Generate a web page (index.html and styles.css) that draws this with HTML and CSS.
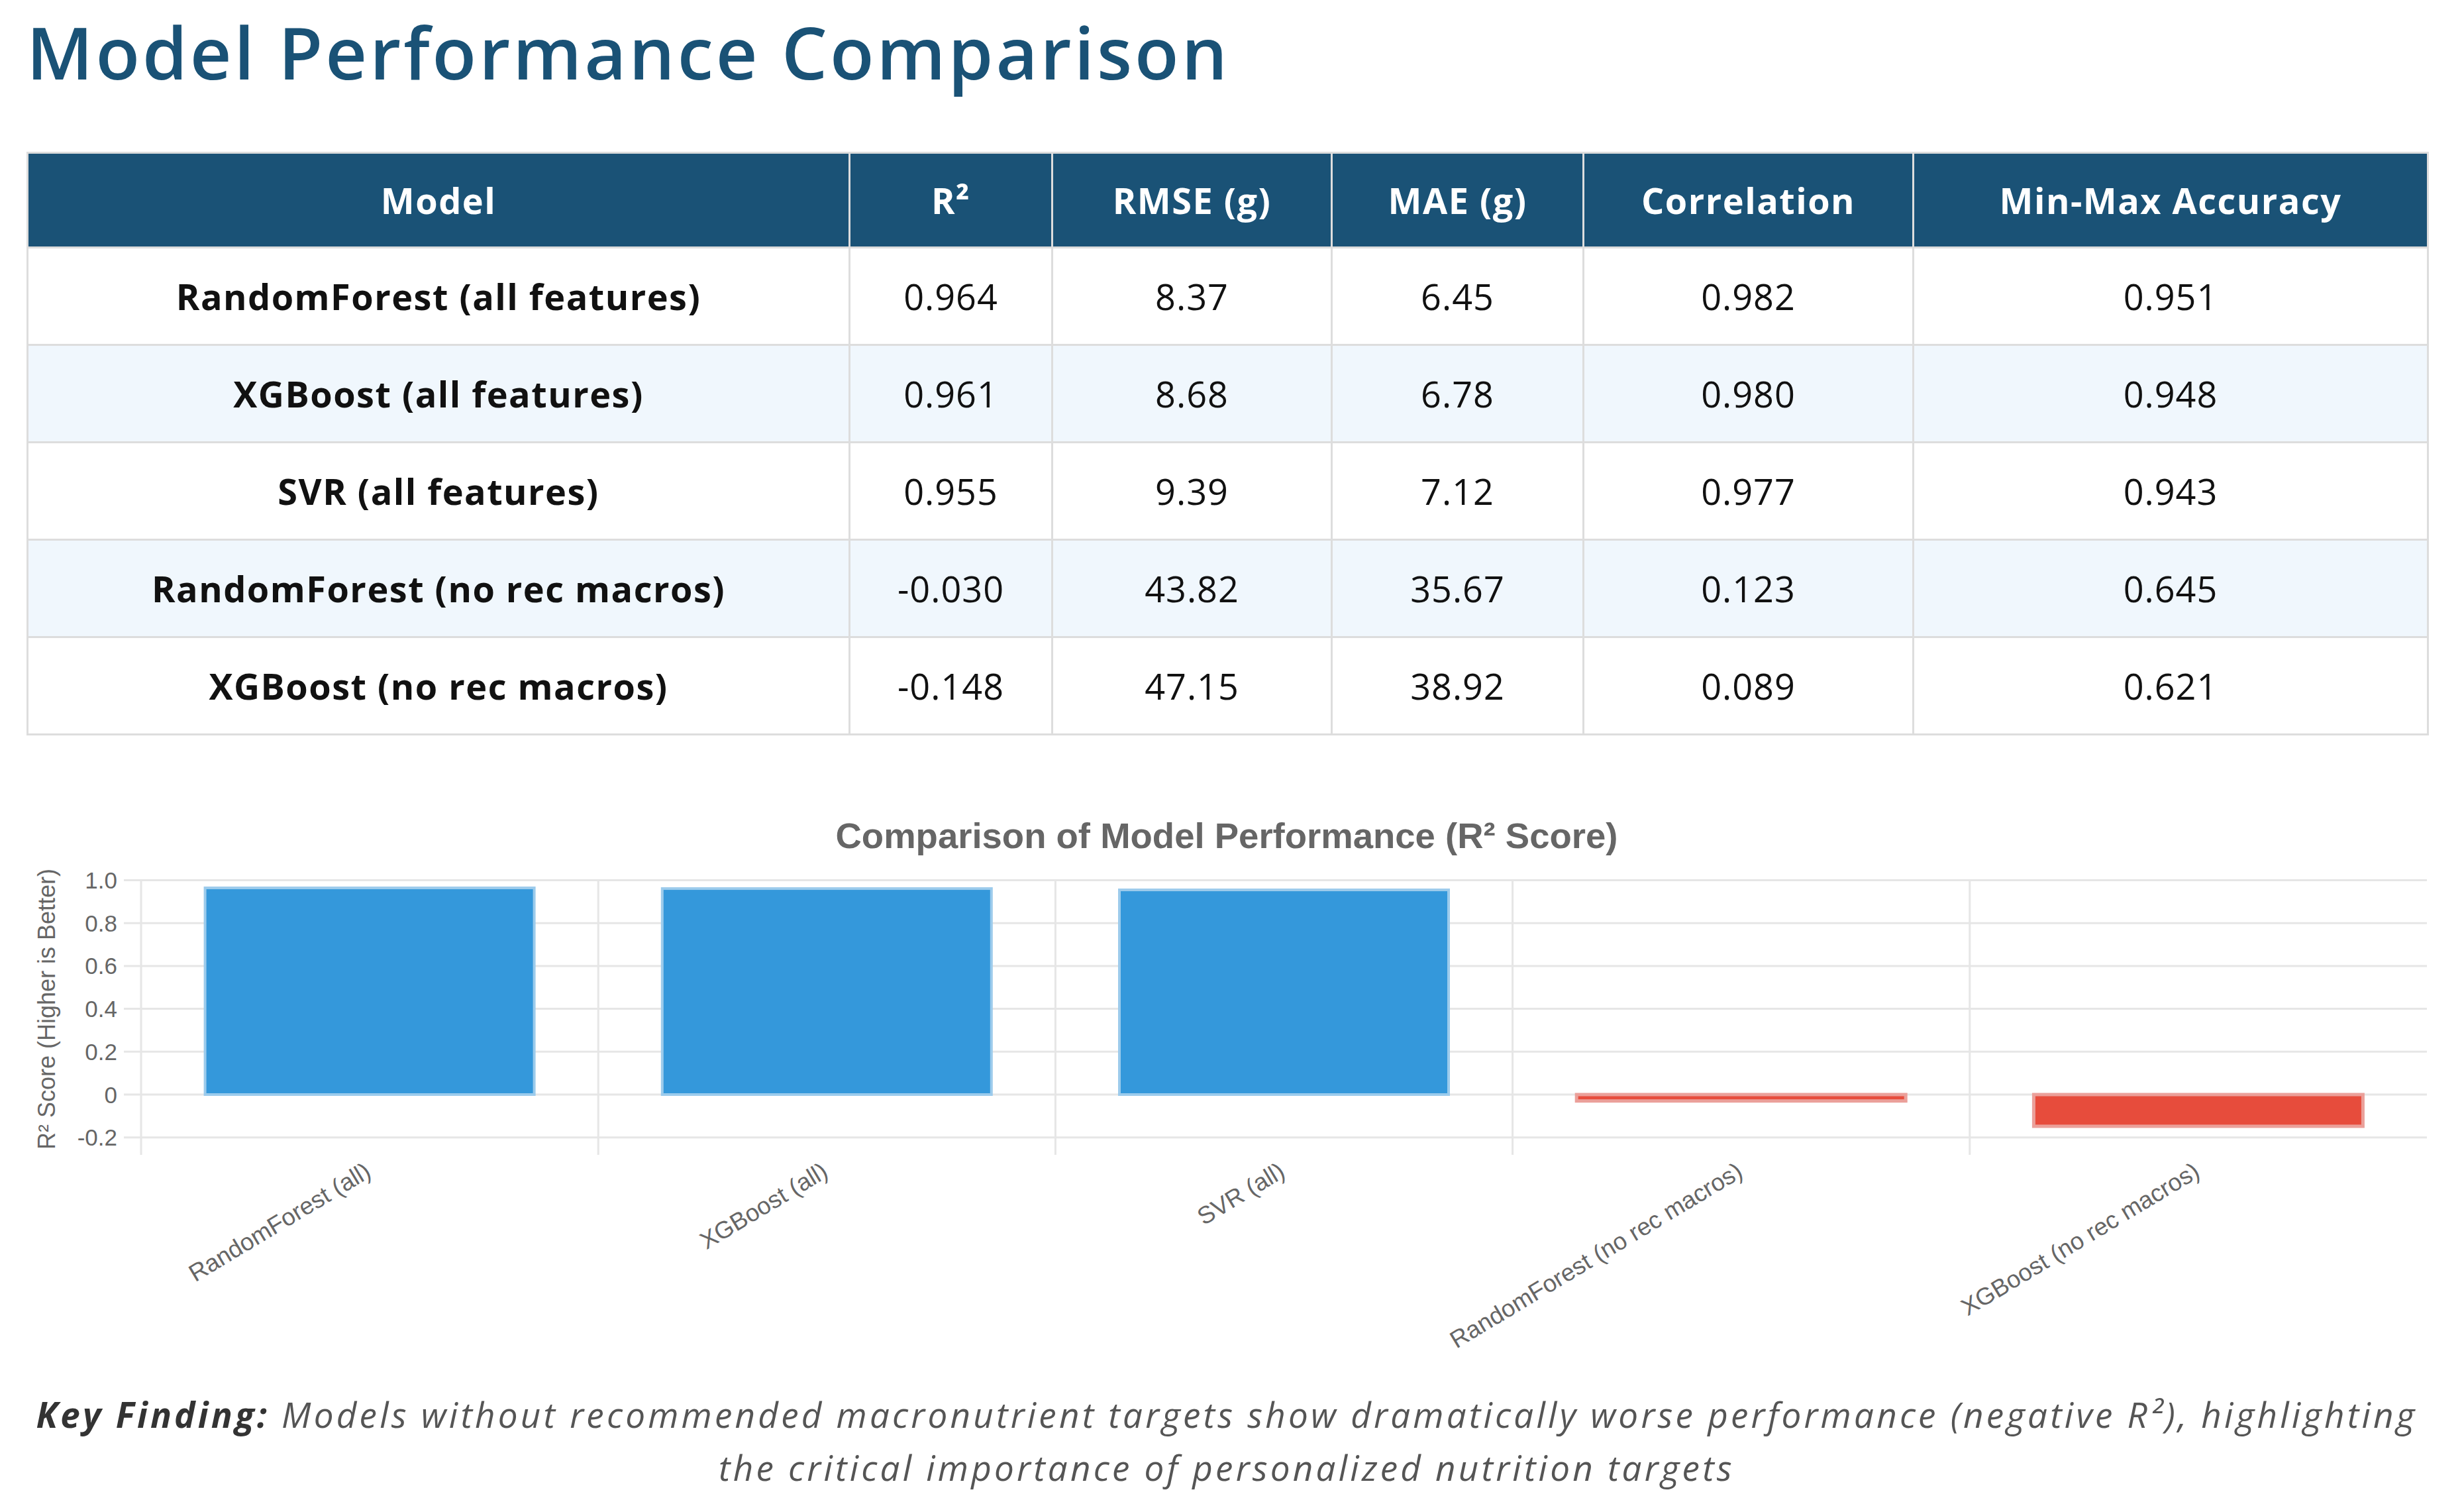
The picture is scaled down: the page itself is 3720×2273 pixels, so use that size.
FILE: index.html
```html
<!DOCTYPE html>
<html lang="en">
<head>
<meta charset="utf-8">
<title>Model Performance Comparison</title>
<link rel="stylesheet" href="styles.css">
</head>
<body>
<div class="page">
  <h1 class="title">Model Performance Comparison</h1>
  <table class="perf">
    <colgroup>
      <col class="c-model"><col class="c-r2"><col class="c-rmse"><col class="c-mae"><col class="c-corr"><col class="c-acc">
    </colgroup>
    <thead>
      <tr><th>Model</th><th>R²</th><th>RMSE (g)</th><th>MAE (g)</th><th>Correlation</th><th>Min-Max Accuracy</th></tr>
    </thead>
    <tbody>
      <tr><td class="model">RandomForest (all features)</td><td>0.964</td><td>8.37</td><td>6.45</td><td>0.982</td><td>0.951</td></tr>
      <tr class="alt"><td class="model">XGBoost (all features)</td><td>0.961</td><td>8.68</td><td>6.78</td><td>0.980</td><td>0.948</td></tr>
      <tr><td class="model">SVR (all features)</td><td>0.955</td><td>9.39</td><td>7.12</td><td>0.977</td><td>0.943</td></tr>
      <tr class="alt"><td class="model">RandomForest (no rec macros)</td><td>-0.030</td><td>43.82</td><td>35.67</td><td>0.123</td><td>0.645</td></tr>
      <tr><td class="model">XGBoost (no rec macros)</td><td>-0.148</td><td>47.15</td><td>38.92</td><td>0.089</td><td>0.621</td></tr>
    </tbody>
  </table>

  <div class="chart">
    <svg class="chart-svg" width="3624" height="870" viewBox="0 0 3624 870" xmlns="http://www.w3.org/2000/svg">
      <text class="c-title" x="1812" y="98" text-anchor="middle">Comparison of Model Performance (R² Score)</text>

      <g class="grid">
        <line x1="147" y1="146.5" x2="3624" y2="146.5"/>
        <line x1="147" y1="211.2" x2="3624" y2="211.2"/>
        <line x1="147" y1="275.9" x2="3624" y2="275.9"/>
        <line x1="147" y1="340.6" x2="3624" y2="340.6"/>
        <line x1="147" y1="405.3" x2="3624" y2="405.3"/>
        <line x1="147" y1="470" x2="3624" y2="470"/>
        <line x1="147" y1="534.7" x2="3624" y2="534.7"/>
        <line x1="173" y1="146.5" x2="173" y2="561"/>
        <line x1="863.2" y1="146.5" x2="863.2" y2="561"/>
        <line x1="1553.4" y1="146.5" x2="1553.4" y2="561"/>
        <line x1="2243.6" y1="146.5" x2="2243.6" y2="561"/>
        <line x1="2933.8" y1="146.5" x2="2933.8" y2="561"/>
      </g>

      <g class="tick" text-anchor="end">
        <text x="137" y="146.5" dominant-baseline="central">1.0</text>
        <text x="137" y="211.2" dominant-baseline="central">0.8</text>
        <text x="137" y="275.9" dominant-baseline="central">0.6</text>
        <text x="137" y="340.6" dominant-baseline="central">0.4</text>
        <text x="137" y="405.3" dominant-baseline="central">0.2</text>
        <text x="137" y="470" dominant-baseline="central">0</text>
        <text x="137" y="534.7" dominant-baseline="central">-0.2</text>
      </g>

      <text class="axis-title" transform="translate(30,341) rotate(-90)" text-anchor="middle" dominant-baseline="central">R² Score (Higher is Better)</text>

      <rect class="bar-pos" x="269.6" y="158.1" width="497" height="311.9"/>
      <rect class="bar-pos" x="959.8" y="159.1" width="497" height="310.9"/>
      <rect class="bar-pos" x="1650" y="161.1" width="497" height="308.9"/>
      <rect class="bar-neg" x="2340.2" y="470" width="497" height="9.7"/>
      <rect class="bar-neg" x="3030.4" y="470" width="497" height="47.9"/>

      <g class="xtick" text-anchor="end">
        <text transform="translate(516,582) rotate(-31)" dominant-baseline="central">RandomForest (all)</text>
        <text transform="translate(1206,582) rotate(-31)" dominant-baseline="central">XGBoost (all)</text>
        <text transform="translate(1896,582) rotate(-31)" dominant-baseline="central">SVR (all)</text>
        <text transform="translate(2587,582) rotate(-31)" dominant-baseline="central">RandomForest (no rec macros)</text>
        <text transform="translate(3277,582) rotate(-31)" dominant-baseline="central">XGBoost (no rec macros)</text>
      </g>
    </svg>
  </div>

  <p class="finding"><strong>Key Finding:</strong> Models without recommended macronutrient targets show dramatically worse performance (negative R²), highlighting<br>the critical importance of personalized nutrition targets</p>
</div>
</body>
</html>
```

FILE: styles.css
```css
body {
  margin: 0;
  background: #ffffff;
  font-family: "Open Sans", "Noto Sans", sans-serif;
}

.page {
  width: 3624px;
  padding: 4px 0 0 40px;
}

.title {
  margin: 0;
  font-size: 109px;
  line-height: 148px;
  font-weight: 600;
  color: #1a5276;
  letter-spacing: 4px;
}

.perf {
  margin-top: 77px;
  width: 3624px;
  border-collapse: collapse;
  table-layout: fixed;
  font-size: 54px;
}

.c-model { width: 1241px; }
.c-r2 { width: 306px; }
.c-rmse { width: 422px; }
.c-mae { width: 380px; }
.c-corr { width: 498px; }
.c-acc { width: 777px; }

.perf th,
.perf td {
  border: 3px solid #dddddd;
  text-align: center;
  vertical-align: middle;
  padding: 0;
}

.perf th {
  background: #1a5276;
  color: #ffffff;
  font-weight: 700;
  height: 140px;
  letter-spacing: 1.5px;
}

.perf td {
  height: 144px;
  color: #111111;
  letter-spacing: 1px;
}

.perf td.model {
  font-weight: 700;
  letter-spacing: 1.5px;
}

.perf tr.alt td {
  background: #f0f7fd;
}

.chart {
  margin-top: 72px;
}

.chart-svg {
  display: block;
}

.c-title {
  font-family: "Liberation Sans", Arial, sans-serif;
  font-weight: 700;
  font-size: 54.5px;
  fill: #666666;
}

.grid line {
  stroke: #e6e6e6;
  stroke-width: 3;
}

.tick text {
  font-family: "Liberation Sans", Arial, sans-serif;
  font-size: 35px;
  fill: #666666;
}

.xtick text {
  font-family: "Liberation Sans", Arial, sans-serif;
  font-size: 36.5px;
  fill: #666666;
}

.axis-title {
  font-family: "Liberation Sans", Arial, sans-serif;
  font-size: 36px;
  fill: #666666;
}

.bar-pos {
  fill: #3498db;
  stroke: #9ccbec;
  stroke-width: 4;
}

.bar-neg {
  fill: #e74c3c;
  stroke: #eba09a;
  stroke-width: 5;
}

.finding {
  margin: 43px 0 0;
  text-align: center;
  font-style: italic;
  font-size: 53px;
  line-height: 80px;
  color: #555555;
  letter-spacing: 4.2px;
}

.finding strong {
  color: #333333;
  font-weight: 700;
}
```
